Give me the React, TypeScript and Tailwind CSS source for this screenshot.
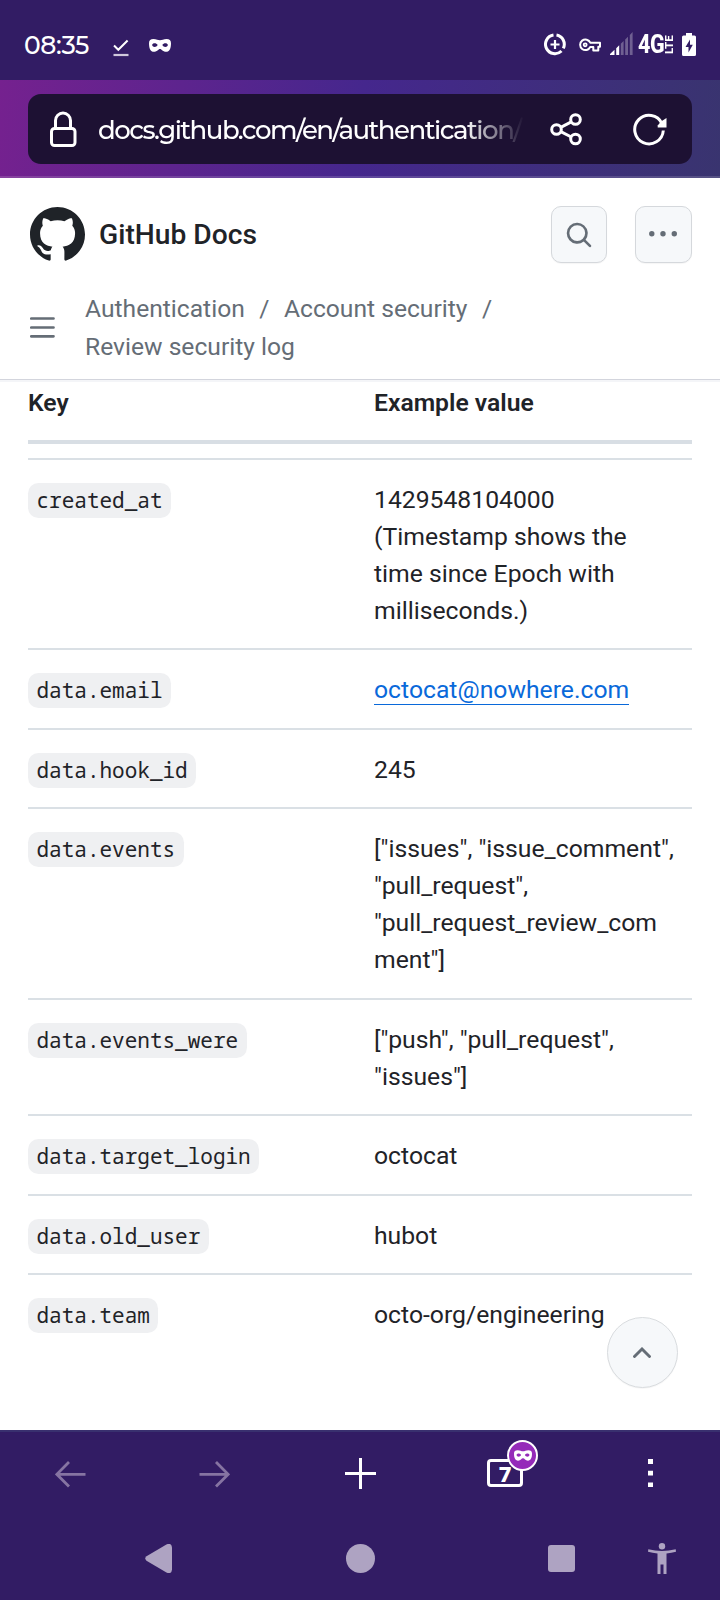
import type { ReactNode } from 'react';

type Row = { key: string; lines: string[]; link?: boolean };

const rows: Row[] = [
  {
    key: 'created_at',
    lines: ['1429548104000', '(Timestamp shows the', 'time since Epoch with', 'milliseconds.)'],
  },
  { key: 'data.email', lines: ['octocat@nowhere.com'], link: true },
  { key: 'data.hook_id', lines: ['245'] },
  {
    key: 'data.events',
    lines: ['["issues", "issue_comment",', '"pull_request",', '"pull_request_review_com', 'ment"]'],
  },
  { key: 'data.events_were', lines: ['["push", "pull_request",', '"issues"]'] },
  { key: 'data.target_login', lines: ['octocat'] },
  { key: 'data.old_user', lines: ['hubot'] },
  { key: 'data.team', lines: ['octo-org/engineering'] },
];

function Mask({ className }: { className: string }) {
  return (
    <svg viewBox="0 0 22 13" className={className} fill="currentColor" fillRule="evenodd">
      <path d="M0 4.200C0 1.200 1.600 0 4.400 0 7.600 0 9 1.300 11 1.300S14.400 0 17.600 0C20.400 0 22 1.200 22 4.200 22 9.400 20.600 12.800 17 12.800 13.800 12.800 12.800 10 11 10S8.200 12.800 5 12.800C1.400 12.800 0 9.400 0 4.200ZM3.100 6C3.600 8.400 7.400 8.600 8.700 6 7.400 3.500 3.600 3.500 3.100 6ZM18.900 6C18.400 8.400 14.600 8.600 13.300 6 14.600 3.500 18.400 3.500 18.900 6Z" />
    </svg>
  );
}

function StatusBar() {
  return (
    <div className="flex h-20 items-start bg-[#321c64] text-white">
      <span className="ml-6 mt-[30px] w-[67px] whitespace-nowrap font-['Montserrat',sans-serif] text-[25px] font-medium leading-[30px] tracking-[-0.35px]">
        08:35
      </span>
      <svg viewBox="0 0 16 18" className="ml-[22px] mt-[39px] h-[18px] w-4" fill="none" stroke="#fff">
        <path d="M1 6.500 5.300 10.800 14.600 1.500" strokeWidth="2" />
        <path d="M0.500 16H15.500" strokeWidth="2.200" stroke="#d0c8dc" />
      </svg>
      <Mask className="ml-5 mt-[39px] h-[13px] w-[22px]" />
      <div className="flex-1" />
      <svg viewBox="0 0 22 23" className="mt-[33px] h-[23px] w-[22px]" fill="none" stroke="#fff">
        <path d="M12.500 2A9.400 9.400 0 0 1 19.300 15.400M17.500 18A9.400 9.400 0 1 1 9.500 2" strokeWidth="3" />
        <path d="M11 7V16M6.500 11.500H15.500" strokeWidth="2.200" />
      </svg>
      <svg viewBox="0 0 22 14" className="ml-[13px] mt-[38px] h-[14px] w-[22px]" fill="none" stroke="#fff" strokeWidth="2">
        <path d="M11.300 4.700H21V8.700H19.300V12.500H14.300V8.900H11.300A5.300 5.300 0 1 1 11.300 4.700Z" strokeLinejoin="round" />
        <circle cx="6.200" cy="6.800" r="1.500" strokeWidth="1.800" />
      </svg>
      <svg viewBox="0 0 23 24" className="ml-[9px] mt-8 h-6 w-[23px]" fill="#fff">
        <path d="M0 23V22L4.500 17.700V23ZM6.200 16.300 9.200 13.300V23H6.200Z" />
        <path d="M10.800 11.700 13.600 8.900V23H10.800ZM15.200 7.600 18 4.800V23H15.200ZM19.800 3 22.600 0V23H19.800Z" opacity=".3" />
      </svg>
      <span className="ml-[5px] mt-[32px] w-[27px] origin-left scale-x-[.86] whitespace-nowrap font-['Roboto',sans-serif] text-[25px] font-extrabold leading-[26px] tracking-[-0.5px]">
        4G
      </span>
      <span className="mt-[34px] h-[20px] w-[9px] rotate-180 font-['Roboto',sans-serif] text-[11.500px] font-extrabold leading-[9px] [writing-mode:vertical-rl]">
        LTE
      </span>
      <svg viewBox="0 0 14 23" className="ml-2 mr-6 mt-[33px] h-[23px] w-[14px]">
        <path d="M4 0H10V2.500H12.500Q14 2.500 14 4V21.500Q14 23 12.500 23H1.500Q0 23 0 21.500V4Q0 2.500 1.500 2.500H4Z" fill="#fff" />
        <path d="M8 6.500 3.500 14H6.500V19.500L10.800 11.800H8Z" fill="#321c64" />
      </svg>
    </div>
  );
}

function AddressBar() {
  return (
    <div className="h-[98px] border-b-2 border-white/15 bg-[linear-gradient(97deg,#75218f_0%,#45278d_50%,#39346f_100%)] bg-origin-border px-7 pt-[14px]">
      <div className="flex h-[70px] items-center rounded-[13px] bg-[#1d1133] text-white">
        <svg viewBox="0 0 28 36" className="ml-[21px] h-9 w-7" fill="none" stroke="#fff" strokeWidth="3">
          <rect x="2.500" y="17.500" width="23.500" height="17" rx="3" />
          <path d="M6.500 17V9.500A7.500 7.500 0 0 1 21.500 9.500V17" />
        </svg>
        <div className="ml-[21px] mt-0.5 w-[426px] whitespace-nowrap font-['Montserrat',sans-serif] text-[26px] font-medium leading-10 tracking-[-1.500px] [mask-image:linear-gradient(90deg,#000_86%,transparent_100%)]">
          docs.github.com/en/authentication/
        </div>
        <svg viewBox="0 0 33 33" className="ml-[26px] h-[33px] w-[33px]" fill="none" stroke="#fff" strokeWidth="3">
          <circle cx="6.500" cy="16.500" r="4.800" />
          <circle cx="25.500" cy="6.500" r="4.800" />
          <circle cx="25.500" cy="26" r="4.800" />
          <path d="M10.800 14.300 21.300 8.800M10.800 18.600 21.300 24" />
        </svg>
        <svg viewBox="0 0 35 33" className="ml-[50px] h-[33px] w-[35px]" fill="none">
          <path d="M28.900 10.300A14.300 14.300 0 1 0 30.300 17.500" stroke="#fff" strokeWidth="3" />
          <path d="M24.700 14.500V12.500L28 8.500 33.500 5V14.500Z" fill="#fff" />
        </svg>
      </div>
    </div>
  );
}

function IconButton({ width, children }: { width: string; children: ReactNode }) {
  return (
    <div
      className={`flex h-[57px] ${width} items-center justify-center rounded-[10px] border border-[#d5d8dc] bg-[#f6f8fa] text-[#656d76] shadow-[0_1px_1px_rgba(0,0,0,0.04)]`}
    >
      {children}
    </div>
  );
}

function DocsHeader() {
  return (
    <header className="h-[202px] border-b border-[#d3d5dd] bg-white shadow-[0_2px_0_#f4f5f8]">
      <div className="flex items-center pl-[30px] pr-7 pt-7">
        <svg viewBox="0 0 16 16" className="h-[55px] w-[55px]" fill="#1f2328">
          <path d="M8 0C3.58 0 0 3.58 0 8c0 3.54 2.29 6.53 5.47 7.59.4.07.55-.17.55-.38 0-.19-.01-.82-.01-1.49-2.01.37-2.53-.49-2.69-.94-.09-.23-.48-.94-.82-1.13-.28-.15-.68-.52-.01-.53.63-.01 1.08.58 1.23.82.72 1.21 1.87.87 2.33.66.07-.52.28-.87.51-1.07-1.78-.2-3.64-.89-3.64-3.95 0-.87.31-1.59.82-2.15-.08-.2-.36-1.02.08-2.12 0 0 .67-.21 2.2.82.64-.18 1.32-.27 2-.27s1.36.09 2 .27c1.53-1.04 2.2-.82 2.2-.82.44 1.1.16 1.92.08 2.12.51.56.82 1.27.82 2.15 0 3.07-1.87 3.75-3.65 3.95.29.25.54.73.54 1.48 0 1.07-.01 1.93-.01 2.2 0 .21.15.46.55.38A8.01 8.01 0 0 0 16 8c0-4.42-3.58-8-8-8Z" />
        </svg>
        <span className="ml-[14px] text-[28.200px] font-medium leading-[42px]">GitHub Docs</span>
        <div className="ml-auto flex gap-7">
          <IconButton width="w-[56px]">
            <svg viewBox="0 0 16 16" className="h-7 w-7" fill="currentColor">
              <path d="M10.68 11.74a6 6 0 0 1-7.922-8.982 6 6 0 0 1 8.982 7.922l3.04 3.04a.749.749 0 0 1-.326 1.275.749.749 0 0 1-.734-.215ZM11.5 7a4.499 4.499 0 1 0-8.997 0A4.499 4.499 0 0 0 11.500 7Z" />
            </svg>
          </IconButton>
          <IconButton width="w-[57px]">
            <svg viewBox="0 0 28 28" className="mr-px h-7 w-7" fill="currentColor">
              <circle cx="2.800" cy="12.800" r="2.700" />
              <circle cx="14" cy="12.800" r="2.700" />
              <circle cx="25.300" cy="12.800" r="2.700" />
            </svg>
          </IconButton>
        </div>
      </div>
      <div className="flex items-center pl-[30px] pt-[26px] text-[24.640px] leading-[38px] text-[#656d76]">
        <svg viewBox="0 0 25 22" className="h-[22px] w-[25px]" fill="none" stroke="currentColor" strokeWidth="2.700" strokeLinecap="round">
          <path d="M1.300 2.500H23.500M1.300 11.500H23.500M1.300 20.300H23.500" />
        </svg>
        <nav className="ml-[30px] pt-px -mb-px">
          <div className="flex">
            <span>Authentication</span>
            <span className="mx-[14.500px]">/</span>
            <span>Account security</span>
            <span className="ml-[14.500px]">/</span>
          </div>
          <div>Review security log</div>
        </nav>
      </div>
    </header>
  );
}

function KeyTable() {
  return (
    <main className="relative h-[1050px] px-7">
      <div className="flex h-16 border-b-[4px] border-[#d8dee4] pt-[4px] text-[24.700px] font-semibold leading-[37px]">
        <div className="w-[346px]">Key</div>
        <div>Example value</div>
      </div>
      <div className="mt-[14px]">
        {rows.map((row) => (
          <div key={row.key} className="flex border-t-2 border-[#dae0e5] pb-[19.450px] pt-[21px]">
            <div className="h-[37px] w-[346px] pt-[2px]">
              <code className="block h-[35px] w-fit rounded-[10.500px] bg-[#eff0f2] px-[8.500px] font-['Noto_Sans_Mono','DejaVu_Sans_Mono',monospace] text-[21px] leading-[34px]">
                {row.key}
              </code>
            </div>
            <div className="text-[24.720px] leading-[37px]">
              {row.lines.map((line) => (
                <div key={line} className="h-[37px] whitespace-nowrap">
                  {row.link ? (
                    <a className="inline-block h-[34px] border-b border-[#0969da] text-[#0969da]">{line}</a>
                  ) : (
                    line
                  )}
                </div>
              ))}
            </div>
          </div>
        ))}
      </div>
      <button className="absolute left-[607px] top-[937px] flex h-[71px] w-[71px] items-center justify-center rounded-full border border-[#d9dcdf] bg-[#f6f8fa] shadow-[0_1px_1px_rgba(0,0,0,0.04)]">
        <svg viewBox="0 0 18 11" className="mb-px mr-px h-[11px] w-[18px]" fill="none" stroke="#656d76" strokeWidth="2.900" strokeLinecap="round">
          <path d="M1.500 9.500 9 2 16.500 9.500" />
        </svg>
      </button>
    </main>
  );
}

function BrowserToolbar() {
  return (
    <div className="flex h-[90px] items-start border-t-2 border-[#39306f] bg-[#321c64]">
      <svg viewBox="0 0 31 28" className="ml-[54.500px] mt-7 h-7 w-[31px]" fill="none" stroke="#8674a2" strokeWidth="2.800">
        <path d="M1.800 14.300H30.500M14 2 1.800 14.300 14 26.600" />
      </svg>
      <svg viewBox="0 0 31 28" className="ml-[113.500px] mt-7 h-7 w-[31px]" fill="none" stroke="#8674a2" strokeWidth="2.800">
        <path d="M29.200 14.300H.5M17 2 29.200 14.300 17 26.600" />
      </svg>
      <svg viewBox="0 0 31 31" className="ml-[115px] mt-[25.500px] h-[31px] w-[31px]" fill="none" stroke="#fff" strokeWidth="3">
        <path d="M15.500 0V31M0 15.500H31" />
      </svg>
      <div className="relative ml-[111px] mt-[27px] flex h-7 w-9 items-center justify-center rounded-[4px] border-[3px] border-white font-['Noto_Sans',sans-serif] text-[22px] font-extrabold leading-none text-white">
        <span className="-mt-px">7</span>
        <div className="absolute -top-[22px] left-[17px] flex h-[31px] w-[31px] items-center justify-center rounded-full border-2 border-white bg-[#952bb9]">
          <Mask className="h-[11px] w-[18px]" />
        </div>
      </div>
      <svg viewBox="0 0 5 28" className="ml-[125px] mt-[27px] h-7 w-[5px]" fill="#fff">
        <path d="M0 0H5V5H0ZM0 11.700H5V16.500H0ZM0 23.500H5V28.500H0Z" />
      </svg>
    </div>
  );
}

function SystemNav() {
  return (
    <div className="flex h-20 items-start bg-[#321c64] text-[#aea3c2]">
      <svg viewBox="0 0 27 29" className="ml-[145px] mt-6 h-[29px] w-[27px]" fill="currentColor">
        <path d="M1.500 12.300Q-1 14.500 1.500 16.700L21 28.300Q26.500 31 27 25.500V3.500Q26.500-2 21 .7Z" />
      </svg>
      <div className="ml-[174px] mt-6 h-[29px] w-[29px] rounded-full bg-[#aea3c2]" />
      <div className="ml-[173px] mt-[25px] h-[27px] w-[27px] rounded-[3px] bg-[#aea3c2]" />
      <svg viewBox="0 0 28 31" className="ml-[73px] mt-[23px] h-[31px] w-7" fill="currentColor">
        <circle cx="14" cy="3.200" r="3.200" />
        <path d="M.3 6.200Q14 9.600 27.700 6.200L28 8.800Q23.500 10 18.500 10.600V31H15.500V21.500H12.500V31H9.500V10.600Q4.500 10 0 8.800Z" />
      </svg>
    </div>
  );
}

export default function App() {
  return (
    <div className="h-[1600px] w-[720px] overflow-hidden bg-white font-['Roboto',sans-serif] text-[#1f2328]">
      <StatusBar />
      <AddressBar />
      <DocsHeader />
      <KeyTable />
      <BrowserToolbar />
      <SystemNav />
    </div>
  );
}
